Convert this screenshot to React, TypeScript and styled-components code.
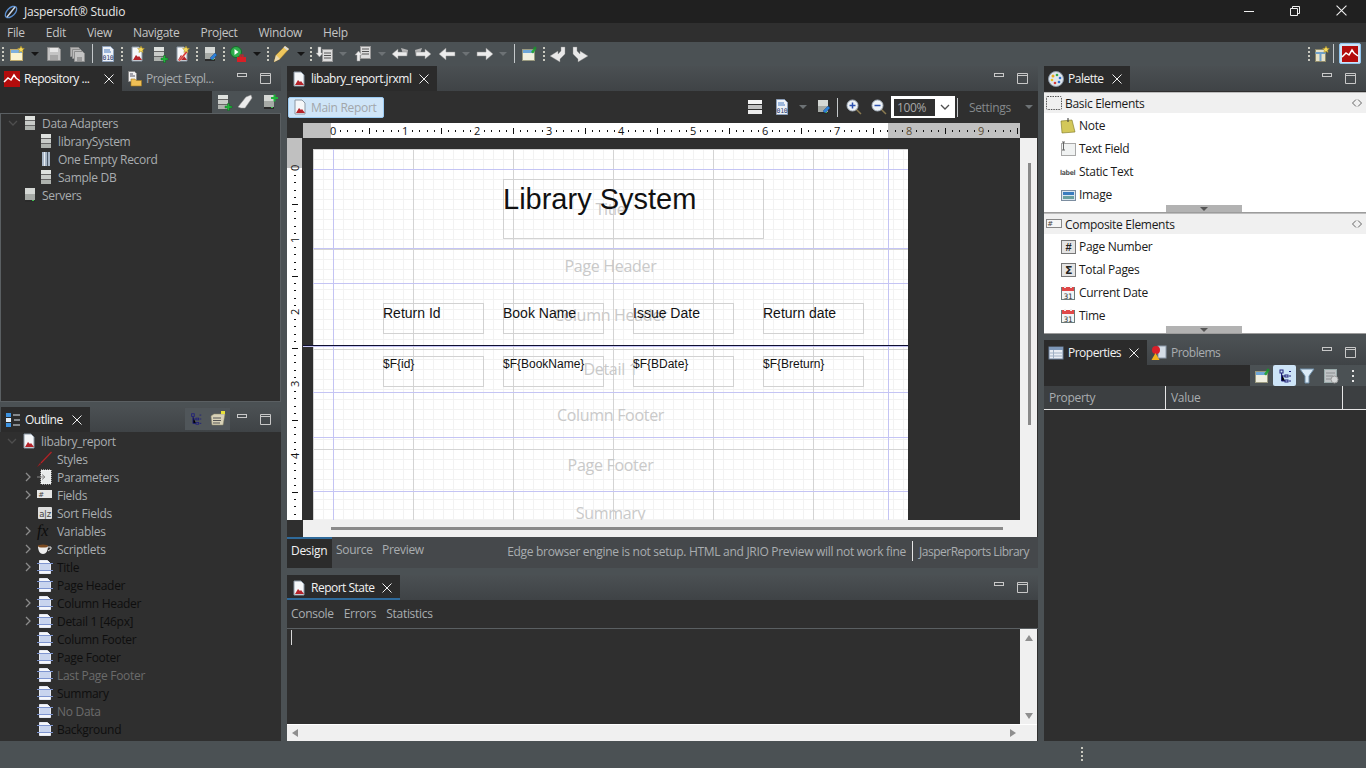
import type { ReactNode } from "react";
import styled, { createGlobalStyle } from "styled-components";

const GlobalStyle = createGlobalStyle`
  html, body { margin: 0; padding: 0; background: #4b5154; }
  * { box-sizing: border-box; }
  body {
    font-family: "Open Sans", "Noto Sans", sans-serif;
    font-size: 12px;
    letter-spacing: -0.3px;
    overflow: hidden;
  }
`;

const star = (
  <path d="M12 0l1 2.2 2.4.3-1.8 1.6.5 2.4L12 5.300l-2.100 1.200.5-2.400L8.600 2.500 11 2.200z" fill="#f7d95a" stroke="#a98a20" strokeWidth=".5" />
);
const plus = <path d="M10 12h2.500V9.500h2V12H17v2h-2.500v2.500h-2V14H10z" fill="#1fb53a" stroke="#0d5c1c" strokeWidth=".4" />;
const reportPage = (
  <>
    <path d="M3 1h7l3 3v11H3z" fill="#f5f7f9" stroke="#8b98a5" />
    <path d="M4 14l3-5 2 2 1-1 3 4z" fill="#b4232a" />
  </>
);
const stack = (
  <>
    <rect x="3" y="1" width="10" height="4" fill="#dfe2df" />
    <rect x="3" y="5" width="10" height="1" fill="#666" />
    <rect x="3" y="6" width="10" height="4" fill="#c8cbc8" />
    <rect x="3" y="10" width="10" height="1" fill="#666" />
    <rect x="3" y="11" width="10" height="4" fill="#aeb2ae" />
  </>
);
const server = (
  <>
    <rect x="3" y="1" width="10" height="13" fill="#d5d8d5" />
    <rect x="3" y="7" width="10" height="7" fill="#a6aaa6" />
    <rect x="3" y="13" width="10" height="2" fill="#2b2b2b" />
    <rect x="10" y="13" width="2" height="1" fill="#3fc04f" />
  </>
);
const calendar = (
  <>
    <rect x="1.500" y="2.500" width="13" height="12" fill="#f2f6f6" stroke="#6b7a7a" />
    <rect x="2" y="2" width="12" height="4" fill="#e04848" />
    <rect x="4" y="1" width="2" height="2" fill="#eee" />
    <rect x="10" y="1" width="2" height="2" fill="#eee" />
    <text x="8" y="13.500" fontSize="7.500" textAnchor="middle" fill="#333" fontFamily="DejaVu Sans">31</text>
  </>
);
const arrowLeft = <path d="M0 8l7-6v4h9v4H7v4z" fill="#ececec" stroke="#8a8a8a" strokeWidth=".5" />;
const arrowRight = <path d="M16 8L9 2v4H0v4h9v4z" fill="#ececec" stroke="#8a8a8a" strokeWidth=".5" />;
const gearWin = (
  <>
    <rect x="1.500" y="3.500" width="12" height="11" fill="#f0efe0" stroke="#9a9a80" />
    <rect x="2" y="4" width="11" height="3" fill="#6fa6d8" />
    <path d="M10 6l3-4 2 1.500-3 4z" fill="#29a33c" />
    <circle cx="14" cy="2" r="1.500" fill="#1f8a30" />
  </>
);

const icons: Record<string, ReactNode> = {
  report: reportPage,
  newWin: (
    <>
      <rect x="1.500" y="3.500" width="12" height="11" fill="#fbf3d0" stroke="#bda96c" />
      <rect x="2" y="4" width="11" height="3" fill="#7fb0de" />
      {star}
    </>
  ),
  save: (
    <>
      <path d="M1.500 1.500h11l2 2v11h-13z" fill="#c4c4c4" stroke="#8d8d8d" />
      <rect x="4" y="2" width="8" height="4" fill="#e6e6e6" />
      <rect x="4" y="9" width="8" height="5" fill="#a6a6a6" />
    </>
  ),
  saveAll: (
    <>
      <path d="M1.500 1.500h8l2 2v7h-10z" fill="#b4b4b4" stroke="#8d8d8d" />
      <path d="M3.500 3.500h8l2 2v7h-10z" fill="#bcbcbc" stroke="#8d8d8d" />
      <path d="M5.500 5.500h8l2 2v8h-10z" fill="#c4c4c4" stroke="#8d8d8d" />
      <rect x="8" y="11" width="5" height="4" fill="#9a9a9a" />
    </>
  ),
  doc010: (
    <>
      <path d="M2.500.500h8l3 3v12h-11z" fill="#eef2f8" stroke="#8da0bb" />
      <path d="M4 4h6M4 6h7" stroke="#4a7cc0" />
      <text x="8" y="14" fontSize="6.500" textAnchor="middle" fill="#223a6a" fontFamily="DejaVu Sans Mono">010</text>
    </>
  ),
  reportNew: (
    <>
      {reportPage}
      {star}
    </>
  ),
  reportEdit: (
    <>
      {reportPage}
      <path d="M4 15L12 5l1.500 1.500L6 15z" fill="#d8352e" stroke="#fff" strokeWidth=".4" />
      {star}
    </>
  ),
  stackAdd: (
    <>
      {stack}
      {plus}
    </>
  ),
  serverAdd: (
    <>
      {server}
      <path d="M10 3h2.500V.500h2V3H17v2h-2.500v2.500h-2V5H10z" fill="#1fb53a" />
    </>
  ),
  serverEdit: (
    <>
      {server}
      <path d="M8 12l5-5 2 2-5 5z" fill="#2a7fd8" stroke="#123f78" strokeWidth=".4" />
    </>
  ),
  stack,
  server,
  record: (
    <>
      <rect x="4" y="1" width="8" height="14" fill="#a8b6c6" />
      <rect x="6" y="1" width="1" height="14" fill="#e8eef4" />
      <rect x="9" y="1" width="1" height="14" fill="#4b5a6a" />
    </>
  ),
  eraser: <path d="M1 13l8-10 5-2 1 3-7 10H4z" fill="#ececec" stroke="#999" strokeWidth=".5" />,
  run: (
    <>
      <circle cx="6" cy="6" r="5.500" fill="#2fae4c" stroke="#176a2a" />
      <path d="M4.500 3l4 3-4 3z" fill="#fff" />
      <rect x="7" y="11" width="9" height="5" fill="#d81f26" />
      <rect x="10" y="9" width="3" height="2" fill="none" stroke="#d81f26" />
    </>
  ),
  brush: (
    <>
      <path d="M0 16l2-7L11 0l4 3-9 10z" fill="#eec65c" stroke="#8d6b22" strokeWidth=".5" />
      <path d="M0 16l2-7 4 4z" fill="#ead9b2" />
      <path d="M11 0l4 3-1.500 1.500-4-3z" fill="#dcdcdc" />
    </>
  ),
  importDoc: (
    <>
      <rect x="5.500" y="3.500" width="10" height="12" fill="#ddd" stroke="#999" />
      <path d="M7 7h7M7 9.500h7M7 12h7" stroke="#555" />
      <path d="M4 1v6h2l-3.500 4L-1 7h2V1z" fill="#ededed" stroke="#999" strokeWidth=".5" />
    </>
  ),
  exportDoc: (
    <>
      <rect x="5.500" y=".500" width="10" height="12" fill="#ddd" stroke="#999" />
      <path d="M7 3h7M7 5.500h7M7 8h7" stroke="#555" />
      <path d="M2 15V9H0l3.500-4L7 9H5v6z" fill="#ededed" stroke="#999" strokeWidth=".5" />
    </>
  ),
  back2: (
    <>
      <path d="M9 2l7 2-1 6-4-2z" fill="#b4b4b4" />
      <path d="M0 8l6-5v3h9v4H6v3z" fill="#ececec" stroke="#8a8a8a" strokeWidth=".5" />
    </>
  ),
  fwd2: (
    <>
      <path d="M7 2L0 4l1 6 4-2z" fill="#b4b4b4" />
      <path d="M16 8l-6-5v3H1v4h9v3z" fill="#ececec" stroke="#8a8a8a" strokeWidth=".5" />
    </>
  ),
  back: arrowLeft,
  fwd: arrowRight,
  gearWin,
  undo: <path d="M15 1v7l-5 5v3L0 10l8-5v3l3-3V1z" fill="#e8e8e8" stroke="#888" strokeWidth=".4" />,
  redo: <path d="M1 1v7l5 5v3l10-6-8-5v3L5 5V1z" fill="#e8e8e8" stroke="#888" strokeWidth=".4" />,
  perspective: (
    <>
      <rect x="1.500" y="3.500" width="10" height="12" fill="#e8e2c8" stroke="#8f8a6a" />
      <path d="M1.500 7h10M6.500 7v8" stroke="#6fa0cc" strokeWidth="2" />
      {star}
    </>
  ),
  jasper: (
    <>
      <rect width="16" height="16" fill="#b30c0c" />
      <path d="M0 11l4-4 3 2 3-5 2 3 4 3" fill="none" stroke="#fff" strokeWidth="1.500" />
    </>
  ),
  folderDoc: (
    <>
      <path d="M2.500.500h6l2 2v8h-8z" fill="#f2f2f2" stroke="#8a8a8a" />
      <path d="M4 3h3M4 5h5" stroke="#556" />
      <path d="M5 8h4l1 1.500h5.500V15H5z" fill="#f0bf55" stroke="#a57a1f" strokeWidth=".6" />
    </>
  ),
  outline: (
    <>
      <rect x="1" y="1" width="5" height="4" fill="#3d93e0" />
      <rect x="1" y="6" width="5" height="4" fill="#e4eef8" />
      <rect x="1" y="11" width="5" height="4" fill="#3d93e0" />
      <path d="M8 3h7M9 8h6M8 13h7" stroke="#dfe8f0" />
    </>
  ),
  palette: (
    <>
      <circle cx="8" cy="8" r="7.500" fill="#dfe6ec" stroke="#8a96a4" />
      <circle cx="5" cy="5" r="1.500" fill="#e8a91e" />
      <circle cx="9" cy="4" r="1.300" fill="#34a84a" />
      <circle cx="12" cy="7" r="1.300" fill="#2f6fd0" />
      <circle cx="4" cy="9" r="1.300" fill="#e8c21e" />
      <circle cx="7" cy="12" r="1.300" fill="#d83a3a" />
      <circle cx="11" cy="11" r="1.300" fill="#2f6fd0" />
    </>
  ),
  properties: (
    <>
      <rect x="1" y="2" width="14" height="12" fill="#e8edf4" stroke="#6b7f98" />
      <rect x="1" y="2" width="14" height="3" fill="#7d97b8" />
      <path d="M1 8h14M1 11h14M5.500 5v9" stroke="#9fb0c4" />
    </>
  ),
  problems: (
    <>
      <rect x="7" y="1" width="8" height="12" fill="#d3dce6" stroke="#8a98a8" />
      <circle cx="5" cy="5" r="4" fill="#d8202a" />
      <path d="M4.500 8l4 7h-8z" fill="#f2b21c" />
    </>
  ),
  tree: (
    <>
      <rect x="3" y="2" width="3" height="3" fill="none" stroke="#20207a" />
      <rect x="8" y="7" width="3" height="2" fill="none" stroke="#20207a" />
      <rect x="8" y="12" width="3" height="2" fill="none" stroke="#20207a" />
      <path d="M4.500 5v8H8M4.500 8H8M12 3.500h2M12 8h2M12 13h2" stroke="#20207a" />
    </>
  ),
  funnel: <path d="M1 1h14l-5 7v7H6V8z" fill="#dbeaf6" stroke="#6e8ea8" />,
  grayDoc: (
    <>
      <rect x="1.500" y="1.500" width="12" height="13" fill="#bfc3c5" stroke="#9aa" />
      <path d="M3 5h9M3 8h7M3 11h5" stroke="#8b8f91" />
      <circle cx="11.500" cy="11.500" r="3.500" fill="#d5d7d8" stroke="#989898" />
    </>
  ),
  outlineView: (
    <>
      <path d="M1 5l3-2h11l-2 11H2z" fill="#d8d2b8" stroke="#8f8a6a" strokeWidth=".5" />
      <path d="M3 7h8M3 9.500h8M3 12h7" stroke="#555" />
      <rect x="11" y="0" width="4" height="3" fill="#e8e23a" />
    </>
  ),
  dots: <path d="M7 2h2v2H7zM7 7h2v2H7zM7 12h2v2H7z" fill="#e8e8e8" />,
  rows: (
    <>
      <rect x="1" y="1" width="14" height="4" fill="#f4f4f4" />
      <rect x="1" y="6" width="14" height="4" fill="#c0c0c0" />
      <rect x="1" y="11" width="14" height="4" fill="#ececec" />
    </>
  ),
  zoomIn: (
    <>
      <path d="M10 10l5 5" stroke="#8a7a50" strokeWidth="1.500" />
      <circle cx="6.500" cy="6.500" r="5.500" fill="#eef2f6" stroke="#a9b4c0" />
      <path d="M3.500 6.500h6M6.500 3.500v6" stroke="#2a50b0" strokeWidth="1.500" />
    </>
  ),
  zoomOut: (
    <>
      <path d="M10 10l5 5" stroke="#8a7a50" strokeWidth="1.500" />
      <circle cx="6.500" cy="6.500" r="5.500" fill="#eef2f6" stroke="#a9b4c0" />
      <path d="M3.500 6.500h6" stroke="#2a50b0" strokeWidth="1.500" />
    </>
  ),
  styles: <path d="M0 16l3-4 1 1zM3.500 11.500L14 .500l1 1L4.500 12.500z" fill="#b5262a" stroke="#5a1a1a" strokeWidth=".3" />,
  params: (
    <>
      <rect x="4" y="1" width="10" height="14" fill="#e9ecec" stroke="#fff" strokeDasharray="1 1" />
      <path d="M0 8h7M5 5.500L8 8l-3 2.500" fill="none" stroke="#888" />
    </>
  ),
  fields: (
    <>
      <rect x="0" y="3" width="15" height="8" fill="#e6e6e6" />
      <text x="4" y="10" fontSize="7" textAnchor="middle" fill="#444" fontFamily="DejaVu Sans">#</text>
    </>
  ),
  sort: (
    <>
      <rect x="1" y="2" width="14" height="12" rx="1" fill="#dedede" />
      <text x="8" y="11.500" fontSize="8.500" textAnchor="middle" fill="#444" fontFamily="DejaVu Sans">a|z</text>
    </>
  ),
  fx: (
    <text x="0" y="12.500" fontSize="16" fontStyle="italic" fill="#0c0c0c" fontFamily="Liberation Serif">fx</text>
  ),
  cup: (
    <>
      <path d="M1 5h10c0 5-2 8-5 8S1 10 1 5z" fill="#eeeeee" />
      <ellipse cx="6" cy="5" rx="5" ry="1.500" fill="#7a4a20" />
      <path d="M11 6h3v2l-3 2" fill="none" stroke="#ddd" />
    </>
  ),
  band: (
    <>
      <path d="M2.500 1.500h8l3 3v10h-11z" fill="#f4f6fb" stroke="#e4e8f2" />
      <rect x="3" y="5" width="10" height="6" fill="#c8d4ee" />
      <path d="M0 4.500h16M0 11.500h16" stroke="#7e95d0" />
    </>
  ),
  dashed: <rect x=".500" y="1.500" width="15" height="13" rx="1" fill="none" stroke="#555" strokeDasharray="1.500 1" />,
  compositeHead: (
    <>
      <rect x=".500" y="3.500" width="15" height="8" fill="#f6f6f6" stroke="#888" />
      <text x="4" y="10" fontSize="7" textAnchor="middle" fill="#444" fontFamily="DejaVu Sans">#</text>
    </>
  ),
  note: (
    <>
      <path d="M1 3l11-1 3 12-13 1z" fill="#d3c85a" stroke="#7a7320" strokeWidth=".6" />
      <path d="M8 0v4" stroke="#333" />
    </>
  ),
  textField: (
    <>
      <rect x="1.500" y="2.500" width="14" height="12" fill="#f0f2f2" stroke="#a8a8a8" />
      <path d="M2 1h3M3.500 1v8M2 9h3" stroke="#666" />
    </>
  ),
  label: (
    <text x="0" y="11" fontSize="6.800" fontWeight="700" fill="#555" fontFamily="DejaVu Sans Condensed, DejaVu Sans">label</text>
  ),
  image: (
    <>
      <rect x="1.500" y="3.500" width="14" height="10" fill="#dbe6f0" stroke="#7c8da0" />
      <rect x="3" y="5" width="11" height="3" fill="#3a7cbf" />
      <rect x="3" y="9" width="11" height="3" fill="#6aa0a0" />
    </>
  ),
  pageNumber: (
    <>
      <rect x="1.500" y="1.500" width="14" height="13" fill="#e4e4e4" stroke="#777" />
      <text x="8.500" y="12" fontSize="11" fontWeight="700" textAnchor="middle" fill="#222" fontFamily="Liberation Sans">#</text>
    </>
  ),
  totalPages: (
    <>
      <rect x="1.500" y="1.500" width="14" height="13" fill="#e4e4e4" stroke="#777" />
      <text x="8.500" y="12" fontSize="11" fontWeight="700" textAnchor="middle" fill="#222" fontFamily="DejaVu Sans">Σ</text>
    </>
  ),
  calendar,
};

const Svg = styled.svg`
  display: block;
  flex: none;
  overflow: visible;
`;

const Icon = ({ name, size = 16 }: { name: string; size?: number }) => (
  <Svg width={size} height={size} viewBox="0 0 16 16">
    {icons[name]}
  </Svg>
);

const CloseGlyph = ({ size = 10, color = "#f0f0f0" }: { size?: number; color?: string }) => (
  <Svg width={size} height={size} viewBox="0 0 10 10">
    <path d="M.5.5l9 9M9.500.5l-9 9" stroke={color} fill="none" />
  </Svg>
);

const Shell = styled.div`
  width: 1366px;
  height: 768px;
  display: flex;
  flex-direction: column;
  background: #4b5154;
  overflow: hidden;
`;

const TitleBar = styled.div`
  height: 23px;
  flex: none;
  display: flex;
  align-items: center;
  padding: 0 2px 0 3px;
  background: #202020;
  color: #e6e6e6;
  letter-spacing: -0.2px;
`;

const TitleText = styled.span`
  margin-left: 5px;
  flex: 1;
`;

const WinButton = styled.div`
  width: 46px;
  height: 23px;
  padding-bottom: 2px;
  display: flex;
  align-items: center;
  justify-content: center;
`;

const MenuBar = styled.div`
  height: 19px;
  flex: none;
  display: flex;
  align-items: center;
  background: #2f2f2f;
  color: #c4c4c4;
`;

const MenuItem = styled.span`
  padding: 0 10px 0 0;
  margin-left: 11px;
  &:first-child {
    margin-left: 7px;
  }
`;

const MainToolbar = styled.div`
  height: 23px;
  flex: none;
  display: flex;
  align-items: center;
  background: #4b5154;
`;

const Slot = styled.div<{ $w: number }>`
  width: ${(p) => p.$w}px;
  height: 100%;
  flex: none;
  display: flex;
  align-items: center;
  justify-content: center;
`;

const Handle = styled.div`
  width: 2px;
  height: 14px;
  background: repeating-linear-gradient(to bottom, #c9c9c0 0 2px, transparent 2px 4px);
`;

const ToolSep = styled.div`
  width: 1px;
  height: 19px;
  background: #c4c8ca;
`;

const Drop = styled.div<{ $off?: boolean }>`
  width: 0;
  height: 0;
  border-left: 4px solid transparent;
  border-right: 4px solid transparent;
  border-top: 4px solid ${(p) => (p.$off ? "#6d7275" : "#151515")};
`;

const ToolSpacer = styled.div`
  flex: 1;
`;

const ActiveTool = styled.div`
  width: 22px;
  height: 21px;
  margin: 0 5px 0 5px;
  display: flex;
  align-items: center;
  justify-content: center;
  background: #cde4f7;
  border: 1px solid #90c4ee;
  border-radius: 2px;
`;

const Workspace = styled.div`
  height: 675px;
  flex: none;
  padding-top: 1px;
  display: grid;
  grid-template-columns: 281px 751px 322px;
  column-gap: 6px;
`;

const Column = styled.div<{ $gap: number }>`
  display: flex;
  flex-direction: column;
  gap: ${(p) => p.$gap}px;
  min-height: 0;
`;

const Panel = styled.section<{ $h: number }>`
  height: ${(p) => p.$h}px;
  flex: none;
  display: flex;
  flex-direction: column;
  background: #2f2f2f;
  overflow: hidden;
`;

const TabBar = styled.div`
  height: 25px;
  flex: none;
  display: flex;
  align-items: stretch;
  background: linear-gradient(#4b5053, #3f4346);
  color: #a9adb0;
`;

const Tab = styled.div<{ $w: number; $active?: boolean; $line?: boolean }>`
  width: ${(p) => p.$w}px;
  flex: none;
  display: flex;
  align-items: center;
  padding-left: 4px;
  padding-top: ${(p) => (p.$line ? 2 : 0)}px;
  gap: 4px;
  color: ${(p) => (p.$active ? "#f2f2f2" : "#a9adb0")};
  background: ${(p) => (p.$active ? "#2b2b2b" : "transparent")};
  border-bottom: ${(p) => (p.$line ? "2px solid #2f6a9a" : "none")};
`;

const TabLabel = styled.span`
  flex: 1;
  min-width: 0;
  white-space: nowrap;
  letter-spacing: -0.5px;
`;

const TabClose = styled.span`
  width: 22px;
  flex: none;
  margin-right: 2px;
  display: flex;
  justify-content: center;
`;

const TabSpacer = styled.div`
  flex: 1;
`;

const ViewControls = styled.div`
  width: 51px;
  flex: none;
  display: flex;
  align-items: flex-start;
  gap: 13px;
  padding: 7px 0 0 7px;
`;

const LeftPad = styled.div<{ $w: number }>`
  width: ${(p) => p.$w}px;
  flex: none;
`;

const PanelTools = styled.div<{ $h: number }>`
  height: ${(p) => p.$h}px;
  flex: none;
  display: flex;
  justify-content: flex-end;
  background: #2b2b2b;
`;

const ToolGroup = styled.div<{ $w: number }>`
  width: ${(p) => p.$w}px;
  display: flex;
  align-items: center;
  background: #4b5154;
`;

const ToolPick = styled.div<{ $w: number; $on?: boolean }>`
  width: ${(p) => p.$w}px;
  height: 21px;
  display: flex;
  align-items: center;
  justify-content: center;
  background: ${(p) => (p.$on ? "#cde4f7" : "transparent")};
  border-radius: 2px;
`;

const OutlineBox = styled.div`
  width: 45px;
  height: 22px;
  display: flex;
  align-items: center;
  justify-content: space-around;
  background: #50565a;
  margin-top: 1px;
`;

const TreeBox = styled.div<{ $bordered?: boolean }>`
  flex: 1;
  min-height: 0;
  border: ${(p) => (p.$bordered ? "1px solid #5a5f62" : "none")};
`;

const TreeRow = styled.div<{ $level: number; $tone?: "soft" | "dark" | "off" }>`
  height: 18px;
  display: flex;
  align-items: center;
  padding-left: ${(p) => 4 + p.$level * 16}px;
  white-space: nowrap;
  color: ${(p) => (p.$tone === "dark" ? "#0e0e0e" : p.$tone === "off" ? "#6b6b6b" : "#a9adb0")};
`;

const Twistie = styled.span`
  width: 16px;
  height: 16px;
  flex: none;
  margin-right: 1px;
  display: flex;
  align-items: center;
  justify-content: center;
`;

const TreeLabel = styled.span`
  margin-left: 4px;
`;

const Chevron = ({ open }: { open?: boolean }) => (
  <Svg width="10" height="10" viewBox="0 0 10 10">
    <path d={open ? "M1 3l4 4 4-4" : "M3 1l4 4-4 4"} fill="none" stroke={open ? "#4e4e4e" : "#8c8c8c"} strokeWidth="1.300" />
  </Svg>
);

type Node = { label: string; icon: string; level: number; twist?: "open" | "closed"; tone?: "soft" | "dark" | "off" };

const Tree = ({ nodes }: { nodes: Node[] }) => (
  <>
    {nodes.map((n) => (
      <TreeRow key={n.label} $level={n.level} $tone={n.tone}>
        <Twistie>{n.twist && <Chevron open={n.twist === "open"} />}</Twistie>
        <Icon name={n.icon} />
        <TreeLabel>{n.label}</TreeLabel>
      </TreeRow>
    ))}
  </>
);

const repoNodes: Node[] = [
  { label: "Data Adapters", icon: "stack", level: 0, twist: "open" },
  { label: "librarySystem", icon: "stack", level: 1 },
  { label: "One Empty Record", icon: "record", level: 1 },
  { label: "Sample DB", icon: "stack", level: 1 },
  { label: "Servers", icon: "server", level: 0 },
];

const outlineNodes: Node[] = [
  { label: "libabry_report", icon: "report", level: 0, twist: "open" },
  { label: "Styles", icon: "styles", level: 1 },
  { label: "Parameters", icon: "params", level: 1, twist: "closed" },
  { label: "Fields", icon: "fields", level: 1, twist: "closed" },
  { label: "Sort Fields", icon: "sort", level: 1 },
  { label: "Variables", icon: "fx", level: 1, twist: "closed" },
  { label: "Scriptlets", icon: "cup", level: 1, twist: "closed" },
  { label: "Title", icon: "band", level: 1, twist: "closed", tone: "dark" },
  { label: "Page Header", icon: "band", level: 1, tone: "dark" },
  { label: "Column Header", icon: "band", level: 1, twist: "closed", tone: "dark" },
  { label: "Detail 1 [46px]", icon: "band", level: 1, twist: "closed", tone: "dark" },
  { label: "Column Footer", icon: "band", level: 1, tone: "dark" },
  { label: "Page Footer", icon: "band", level: 1, tone: "dark" },
  { label: "Last Page Footer", icon: "band", level: 1, tone: "off" },
  { label: "Summary", icon: "band", level: 1, tone: "dark" },
  { label: "No Data", icon: "band", level: 1, tone: "off" },
  { label: "Background", icon: "band", level: 1, tone: "dark" },
];

const ViewButtons = () => (
  <ViewControls>
    <Svg width="10" height="10" viewBox="0 0 10 10">
      <rect x=".5" y=".5" width="9" height="3" fill="none" stroke="#c8c8c8" />
    </Svg>
    <Svg width="11" height="11" viewBox="0 0 11 11">
      <path d="M.5 2.500h10M.5.5h10v10H.5z" fill="none" stroke="#c8c8c8" />
    </Svg>
  </ViewControls>
);

/* report editor */
const EditorBar = styled.div`
  height: 32px;
  flex: none;
  display: flex;
  align-items: center;
  background: #2f2f2f;
  padding-left: 1px;
`;

const MainReportButton = styled.div`
  width: 96px;
  height: 21px;
  display: flex;
  align-items: center;
  gap: 3px;
  padding-left: 3px;
  background: #cfe5f8;
  border: 1px solid #9ccbf2;
  border-radius: 2px;
  color: #a2a6aa;
`;

const ZoomCombo = styled.div`
  width: 64px;
  height: 22px;
  display: flex;
  align-items: center;
  background: #fff;
  padding-left: 3px;
`;

const ZoomValue = styled.div`
  width: 41px;
  height: 17px;
  line-height: 17px;
  padding-left: 3px;
  background: #2f2f2f;
  color: #a8a8a8;
`;

const ZoomArrow = styled.div`
  flex: 1;
  display: flex;
  justify-content: center;
`;

const SettingsText = styled.span`
  color: #85898c;
`;

const DesignGrid = styled.div`
  display: grid;
  grid-template-columns: 16px 717px 17px;
  grid-template-rows: 15px 382px 17px;
  flex: none;
  background: #2f2f2f;
`;

const Canvas = styled.div`
  overflow: hidden;
  padding: 11px 0 0 10px;
  background: #2f2f2f;
`;

const VTrack = styled.div`
  background: #f0f0f0;
  padding: 25px 0 0 8px;
`;

const VThumb = styled.div`
  width: 3px;
  height: 262px;
  background: #8a8a8a;
`;

const HTrack = styled.div`
  grid-column: 2 / span 2;
  background: #f0f0f0;
  padding: 7px 0 0 28px;
`;

const HThumb = styled.div`
  width: 672px;
  height: 3px;
  background: #8a8a8a;
`;

const ReportPage = styled.div`
  position: relative;
  width: 595px;
  height: 420px;
  padding-top: 20px;
  font-family: "Liberation Sans", Arial, sans-serif;
  letter-spacing: 0;
  background-color: #fff;
  background-image:
    linear-gradient(to right, #d4d4d4 1px, transparent 1px),
    linear-gradient(to bottom, #d4d4d4 1px, transparent 1px),
    linear-gradient(to right, #f2f2f2 1px, transparent 1px),
    linear-gradient(to bottom, #f2f2f2 1px, transparent 1px);
  background-size: 100px 100px, 100px 100px, 10px 10px, 10px 10px;

  &::before,
  &::after {
    content: "";
    position: absolute;
    top: 0;
    bottom: 0;
    width: 1px;
    background: #c4c4f4;
  }
  &::before {
    left: 20px;
  }
  &::after {
    right: 19px;
  }
`;

const Band = styled.div<{ $h: number; $first?: boolean }>`
  position: relative;
  height: ${(p) => p.$h}px;
  display: flex;
  align-items: center;
  justify-content: center;
  border-top: ${(p) => (p.$first ? "1px solid #c4c4f4" : "none")};
  border-bottom: 1px solid #c4c4f4;
`;

const BandName = styled.span`
  font-family: "Open Sans", sans-serif;
  font-size: 16px;
  letter-spacing: -0.3px;
  color: #c9c9c9;
`;

const ReportElement = styled.div<{ $x: number; $y: number; $w: number; $h: number; $size: number; $pad: number }>`
  position: absolute;
  z-index: 1;
  left: ${(p) => p.$x}px;
  top: ${(p) => p.$y}px;
  width: ${(p) => p.$w}px;
  height: ${(p) => p.$h}px;
  padding-top: ${(p) => p.$pad}px;
  box-shadow: inset 0 0 0 1px #d2d2d2;
  font-size: ${(p) => p.$size}px;
  line-height: 1.15;
  color: #111;
  white-space: nowrap;
`;

const SelectedLine = styled.div`
  position: absolute;
  z-index: 2;
  left: -10px;
  right: 0;
  top: 196px;
  height: 1px;
  background: #101030;
  box-shadow: 0 1px 0 #c4c4f4;
`;

const HRuler = () => {
  const ticks = [];
  for (let i = 0; i < 100; i++) {
    const x = 30 + i * 7.2;
    if (x > 717) break;
    if (i % 10 === 0) {
      const dim = i / 10 >= 8;
      ticks.push(
        <text key={i} x={x} y={11.5} fontSize="11" textAnchor="middle" fill={dim ? "#5a4a30" : "#111"} fontFamily="Open Sans">
          {i / 10}
        </text>
      );
    } else if (i % 5 === 0) {
      ticks.push(<rect key={i} x={Math.round(x)} y={5} width={1} height={6} fill="#111" />);
    } else {
      ticks.push(<rect key={i} x={Math.round(x)} y={7} width={1} height={2} fill="#111" />);
    }
  }
  return (
    <Svg width="717" height="15" viewBox="0 0 717 15">
      <rect width="717" height="15" fill="#fff" />
      <rect width="28" height="15" fill="#c0c0c0" />
      <rect x="585" width="132" height="15" fill="#c0c0c0" />
      {ticks}
    </Svg>
  );
};

const VRuler = () => {
  const ticks = [];
  for (let i = 0; i < 60; i++) {
    const y = 30 + i * 7.2;
    if (y > 382) break;
    if (i % 10 === 0) {
      ticks.push(
        <text key={i} x={8} y={y + 4} fontSize="11" textAnchor="middle" fill="#111" fontFamily="Open Sans" transform={`rotate(-90 8 ${y})`}>
          {i / 10}
        </text>
      );
    } else if (i % 5 === 0) {
      ticks.push(<rect key={i} x={5} y={Math.round(y)} width={6} height={1} fill="#111" />);
    } else {
      ticks.push(<rect key={i} x={7} y={Math.round(y)} width={2} height={1} fill="#111" />);
    }
  }
  return (
    <Svg width="16" height="382" viewBox="0 0 16 382">
      <rect width="15" height="382" fill="#fff" />
      <rect width="15" height="30" fill="#c0c0c0" />
      {ticks}
    </Svg>
  );
};

const columnBoxes = [
  { x: 70, head: "Return Id", field: "$F{id}" },
  { x: 190, head: "Book Name", field: "$F{BookName}" },
  { x: 320, head: "Issue Date", field: "$F{BDate}" },
  { x: 450, head: "Return date", field: "$F{Breturn}" },
];

const EditorTabs = styled.div`
  height: 31px;
  flex: none;
  display: flex;
  align-items: stretch;
  background: #45484b;
  color: #a9adb0;
`;

const EditorTab = styled.div<{ $w: number; $active?: boolean }>`
  width: ${(p) => p.$w}px;
  padding: 0 0 6px 4px;
  display: flex;
  align-items: center;
  color: ${(p) => (p.$active ? "#f2f2f2" : "#a9adb0")};
  background: ${(p) => (p.$active ? "#2b2b2b" : "transparent")};
  border-top: ${(p) => (p.$active ? "2px solid #2f6a9a" : "none")};
`;

const EngineNote = styled.div`
  flex: 1;
  display: flex;
  align-items: center;
  justify-content: flex-end;
  padding-bottom: 3px;
`;

const EngineRule = styled.span`
  width: 1px;
  height: 20px;
  margin: 0 6px;
  background: #e6e6e6;
`;

const EngineLib = styled.span`
  margin-right: 9px;
  letter-spacing: -0.5px;
`;

const SubTabs = styled.div`
  height: 29px;
  flex: none;
  display: flex;
  align-items: center;
  gap: 10px;
  padding: 0 0 2px 4px;
  color: #a9adb0;
  border-bottom: 1px solid #5a5f62;
`;

const ConsoleGrid = styled.div`
  flex: 1;
  display: grid;
  grid-template-columns: 733px 17px;
  grid-template-rows: 95px 17px;
`;

const ConsoleText = styled.div`
  background: #2f2f2f;
  padding: 1px 0 0 4px;
`;

const Caret = styled.div`
  width: 1px;
  height: 15px;
  background: #d8d8d8;
`;

const ConsoleV = styled.div`
  background: #f0f0f0;
  display: flex;
  flex-direction: column;
  justify-content: space-between;
  align-items: center;
  padding: 6px 0 5px;
`;

const ConsoleH = styled.div`
  grid-column: 1 / span 2;
  background: #f0f0f0;
  border-top: 1px solid #fff;
  display: flex;
  justify-content: space-between;
  align-items: center;
  padding: 0 21px 0 5px;
`;

const Arrow = styled.div<{ $dir: "up" | "down" | "left" | "right" }>`
  width: 0;
  height: 0;
  ${(p) =>
    p.$dir === "up"
      ? "border-left:4px solid transparent;border-right:4px solid transparent;border-bottom:6px solid #8f8f8f;"
      : p.$dir === "down"
        ? "border-left:4px solid transparent;border-right:4px solid transparent;border-top:6px solid #8f8f8f;"
        : p.$dir === "left"
          ? "border-top:4px solid transparent;border-bottom:4px solid transparent;border-right:6px solid #8f8f8f;"
          : "border-top:4px solid transparent;border-bottom:4px solid transparent;border-left:6px solid #8f8f8f;"}
`;

/* palette */
const PaletteBody = styled.div`
  flex: 1;
  background: #fff;
  margin-top: 1px;
  display: flex;
  flex-direction: column;
  color: #1a1a1a;
`;

const Drawer = styled.div`
  position: relative;
  height: 121px;
  flex: none;
  overflow: hidden;
  border-top: 1px solid #bdbdbd;
  border-bottom: 1px solid #9c9c9c;
`;

const DrawerHead = styled.div`
  height: 20px;
  display: flex;
  align-items: center;
  gap: 3px;
  padding-left: 2px;
  background: #f0f0f0;
  margin-bottom: 1px;
`;

const DrawerTitle = styled.span`
  flex: 1;
`;

const Collapse = styled.span`
  margin-right: 4px;
  color: #666;
`;

const DrawerItem = styled.div`
  height: 23px;
  display: flex;
  align-items: center;
  gap: 3px;
  padding-left: 16px;
`;

const DrawerScroll = styled.div`
  position: absolute;
  left: 122px;
  bottom: 0;
  width: 76px;
  height: 7px;
  display: flex;
  justify-content: center;
  align-items: center;
  background: #b2b2b2;
`;

const DrawerArrow = styled.div`
  width: 0;
  height: 0;
  border-left: 4px solid transparent;
  border-right: 4px solid transparent;
  border-top: 4px solid #555;
`;

const TableHead = styled.div`
  height: 24px;
  flex: none;
  display: grid;
  grid-template-columns: 122px 177px 1fr;
  background: #3c3f41;
  color: #a9adb0;
  border-bottom: 1px solid #e6e6e6;
`;

const HeadCell = styled.div`
  display: flex;
  align-items: center;
  padding-left: 5px;
  border-right: 1px solid #e6e6e6;
  &:last-child {
    border-right: none;
  }
`;

const StatusBar = styled.div`
  height: 27px;
  flex: none;
  display: flex;
  justify-content: flex-start;
  align-items: flex-start;
  padding: 7px 0 0 1081px;
`;

const toolbar: [string, number][] = [
  ["|", 5], ["newWin", 24], ["v", 12], ["save", 26], ["saveAll", 20], ["/", 10], ["doc010", 22], ["|", 6],
  ["reportNew", 24], ["stackAdd", 20], ["reportEdit", 26], ["|", 4], ["serverEdit", 22], ["|", 6], ["run", 22], ["v", 16],
  ["|", 6], ["brush", 22], ["v", 16], ["|", 4], ["importDoc", 24], ["x", 12], ["exportDoc", 28], ["x", 10],
  ["back2", 26], ["fwd2", 20], ["back", 28], ["x", 10], ["fwd", 28], ["x", 8], ["/", 14], ["gearWin", 16],
  ["|", 14], ["undo", 14], ["redo", 30],
];

const paletteBasic = [
  ["note", "Note"], ["textField", "Text Field"], ["label", "Static Text"], ["image", "Image"],
];
const paletteComposite = [
  ["pageNumber", "Page Number"], ["totalPages", "Total Pages"], ["calendar", "Current Date"], ["calendar", "Time"],
];

const PaletteDrawer = ({ icon, title, items }: { icon: string; title: string; items: string[][] }) => (
  <Drawer>
    <DrawerHead>
      <Icon name={icon} />
      <DrawerTitle>{title}</DrawerTitle>
      <Collapse>
        <Svg width="10" height="8" viewBox="0 0 10 8">
          <path d="M4 .5L.5 4 4 7.500M6 .5L9.500 4 6 7.500" fill="none" stroke="#666" />
        </Svg>
      </Collapse>
    </DrawerHead>
    {items.map(([ico, label]) => (
      <DrawerItem key={label}>
        <Icon name={ico} />
        <span>{label}</span>
      </DrawerItem>
    ))}
    <DrawerScroll>
      <DrawerArrow />
    </DrawerScroll>
  </Drawer>
);

const App = () => (
  <Shell>
    <GlobalStyle />
    <TitleBar>
      <Svg width="16" height="16" viewBox="0 0 16 16">
        <ellipse cx="8" cy="8" rx="7" ry="4" fill="none" stroke="#5b8fd0" strokeWidth="1.300" transform="rotate(-45 8 8)" />
        <path d="M4 13L12 3" stroke="#cfd8e4" strokeWidth="1.500" />
      </Svg>
      <TitleText>Jaspersoft® Studio</TitleText>
      <WinButton>
        <Svg width="10" height="10" viewBox="0 0 10 10">
          <path d="M0 5.500h10" stroke="#f0f0f0" />
        </Svg>
      </WinButton>
      <WinButton>
        <Svg width="10" height="10" viewBox="0 0 10 10">
          <path d="M.5 2.500h7v7h-7zM2.500 2.500v-2h7v7h-2" fill="none" stroke="#f0f0f0" />
        </Svg>
      </WinButton>
      <WinButton>
        <CloseGlyph size={11} />
      </WinButton>
    </TitleBar>

    <MenuBar>
      {["File", "Edit", "View", "Navigate", "Project", "Window", "Help"].map((m) => (
        <MenuItem key={m}>{m}</MenuItem>
      ))}
    </MenuBar>

    <MainToolbar>
      {toolbar.map(([name, w], i) => (
        <Slot key={i} $w={w}>
          {name === "|" ? <Handle /> : name === "/" ? <ToolSep /> : name === "v" ? <Drop /> : name === "x" ? <Drop $off /> : <Icon name={name} />}
        </Slot>
      ))}
      <ToolSpacer />
      <Slot $w={5}>
        <Handle />
      </Slot>
      <Slot $w={22}>
        <Icon name="perspective" />
      </Slot>
      <ToolSep />
      <ActiveTool>
        <Icon name="jasper" />
      </ActiveTool>
    </MainToolbar>

    <Workspace>
      <Column $gap={5}>
        <Panel $h={336}>
          <TabBar>
            <Tab $w={122} $active>
              <Icon name="jasper" />
              <TabLabel>Repository ...</TabLabel>
              <TabClose>
                <CloseGlyph />
              </TabClose>
            </Tab>
            <Tab $w={108}>
              <Icon name="folderDoc" />
              <TabLabel>Project Expl...</TabLabel>
            </Tab>
            <TabSpacer />
            <ViewButtons />
          </TabBar>
          <PanelTools $h={22}>
            <ToolGroup $w={69}>
              <ToolPick $w={21}>
                <Icon name="stackAdd" />
              </ToolPick>
              <ToolPick $w={24}>
                <Icon name="eraser" />
              </ToolPick>
              <ToolPick $w={24}>
                <Icon name="serverAdd" />
              </ToolPick>
            </ToolGroup>
          </PanelTools>
          <TreeBox $bordered>
            <Tree nodes={repoNodes} />
          </TreeBox>
        </Panel>
        <Panel $h={334}>
          <TabBar>
            <LeftPad $w={1} />
            <Tab $w={89} $active>
              <Icon name="outline" />
              <TabLabel>Outline</TabLabel>
              <TabClose>
                <CloseGlyph />
              </TabClose>
            </Tab>
            <TabSpacer />
            <OutlineBox>
              <Icon name="tree" size={14} />
              <Icon name="outlineView" />
            </OutlineBox>
            <ViewButtons />
          </TabBar>
          <TreeBox>
            <Tree nodes={outlineNodes} />
          </TreeBox>
        </Panel>
      </Column>

      <Column $gap={7}>
        <Panel $h={502}>
          <TabBar>
            <Tab $w={150} $active>
              <Icon name="report" />
              <TabLabel>libabry_report.jrxml</TabLabel>
              <TabClose>
                <CloseGlyph />
              </TabClose>
            </Tab>
            <TabSpacer />
            <ViewButtons />
          </TabBar>
          <EditorBar>
            <MainReportButton>
              <Icon name="report" />
              Main Report
            </MainReportButton>
            <ToolSpacer />
            <Slot $w={26}>
              <Icon name="rows" />
            </Slot>
            <Slot $w={28}>
              <Icon name="doc010" />
            </Slot>
            <Slot $w={14}>
              <Drop $off />
            </Slot>
            <Slot $w={26}>
              <Icon name="serverEdit" />
            </Slot>
            <Slot $w={4}>
              <ToolSep />
            </Slot>
            <Slot $w={29}>
              <Icon name="zoomIn" />
            </Slot>
            <Slot $w={20}>
              <Icon name="zoomOut" />
            </Slot>
            <LeftPad $w={2} />
            <ZoomCombo>
              <ZoomValue>100%</ZoomValue>
              <ZoomArrow>
                <Chevron open />
              </ZoomArrow>
            </ZoomCombo>
            <Slot $w={6}>
              <ToolSep />
            </Slot>
            <LeftPad $w={8} />
            <SettingsText>Settings</SettingsText>
            <LeftPad $w={9} />
            <Slot $w={18}>
              <Drop $off />
            </Slot>
          </EditorBar>
          <DesignGrid>
            <div />
            <HRuler />
            <div />
            <VRuler />
            <Canvas>
              <ReportPage>
                <Band $h={80} $first>
                  <BandName>Title</BandName>
                  <ReportElement $x={190} $y={9} $w={261} $h={60} $size={29} $pad={4}>
                    Library System
                  </ReportElement>
                </Band>
                <Band $h={35}>
                  <BandName>Page Header</BandName>
                </Band>
                <Band $h={62}>
                  <BandName>Column Header</BandName>
                  {columnBoxes.map((c) => (
                    <ReportElement key={c.head} $x={c.x} $y={19} $w={101} $h={31} $size={14} $pad={2}>
                      {c.head}
                    </ReportElement>
                  ))}
                </Band>
                <Band $h={47}>
                  <BandName>Detail 1</BandName>
                  {columnBoxes.map((c) => (
                    <ReportElement key={c.field} $x={c.x} $y={10} $w={101} $h={31} $size={12} $pad={2}>
                      {c.field}
                    </ReportElement>
                  ))}
                </Band>
                <Band $h={45}>
                  <BandName>Column Footer</BandName>
                </Band>
                <Band $h={54}>
                  <BandName>Page Footer</BandName>
                </Band>
                <Band $h={42}>
                  <BandName>Summary</BandName>
                </Band>
                <SelectedLine />
              </ReportPage>
            </Canvas>
            <VTrack>
              <VThumb />
            </VTrack>
            <div />
            <HTrack>
              <HThumb />
            </HTrack>
          </DesignGrid>
          <EditorTabs>
            <EditorTab $w={45} $active>
              Design
            </EditorTab>
            <EditorTab $w={46}>Source</EditorTab>
            <EditorTab $w={46}>Preview</EditorTab>
            <EngineNote>
              Edge browser engine is not setup. HTML and JRIO Preview will not work fine
              <EngineRule />
              <EngineLib>JasperReports Library</EngineLib>
            </EngineNote>
          </EditorTabs>
        </Panel>
        <Panel $h={166}>
          <TabBar>
            <Tab $w={113} $active $line>
              <Icon name="report" />
              <TabLabel>Report State</TabLabel>
              <TabClose>
                <CloseGlyph />
              </TabClose>
            </Tab>
            <TabSpacer />
            <ViewButtons />
          </TabBar>
          <SubTabs>
            <span>Console</span>
            <span>Errors</span>
            <span>Statistics</span>
          </SubTabs>
          <ConsoleGrid>
            <ConsoleText>
              <Caret />
            </ConsoleText>
            <ConsoleV>
              <Arrow $dir="up" />
              <Arrow $dir="down" />
            </ConsoleV>
            <ConsoleH>
              <Arrow $dir="left" />
              <Arrow $dir="right" />
            </ConsoleH>
          </ConsoleGrid>
        </Panel>
      </Column>

      <Column $gap={6}>
        <Panel $h={268}>
          <TabBar>
            <Tab $w={86} $active>
              <Icon name="palette" />
              <TabLabel>Palette</TabLabel>
              <TabClose>
                <CloseGlyph />
              </TabClose>
            </Tab>
            <TabSpacer />
            <ViewButtons />
          </TabBar>
          <PaletteBody>
            <PaletteDrawer icon="dashed" title="Basic Elements" items={paletteBasic} />
            <PaletteDrawer icon="compositeHead" title="Composite Elements" items={paletteComposite} />
          </PaletteBody>
        </Panel>
        <Panel $h={401}>
          <TabBar>
            <Tab $w={103} $active>
              <Icon name="properties" />
              <TabLabel>Properties</TabLabel>
              <TabClose>
                <CloseGlyph />
              </TabClose>
            </Tab>
            <Tab $w={80}>
              <Icon name="problems" />
              <TabLabel>Problems</TabLabel>
            </Tab>
            <TabSpacer />
            <ViewButtons />
          </TabBar>
          <PanelTools $h={21}>
            <ToolGroup $w={116}>
              <ToolPick $w={23}>
                <Icon name="gearWin" />
              </ToolPick>
              <ToolPick $w={23} $on>
                <Icon name="tree" />
              </ToolPick>
              <ToolPick $w={22}>
                <Icon name="funnel" />
              </ToolPick>
              <ToolPick $w={25}>
                <Icon name="grayDoc" />
              </ToolPick>
              <ToolPick $w={20}>
                <Icon name="dots" />
              </ToolPick>
            </ToolGroup>
          </PanelTools>
          <TableHead>
            <HeadCell>Property</HeadCell>
            <HeadCell>Value</HeadCell>
            <HeadCell />
          </TableHead>
        </Panel>
      </Column>
    </Workspace>

    <StatusBar>
      <Handle />
    </StatusBar>
  </Shell>
);

export default App;
